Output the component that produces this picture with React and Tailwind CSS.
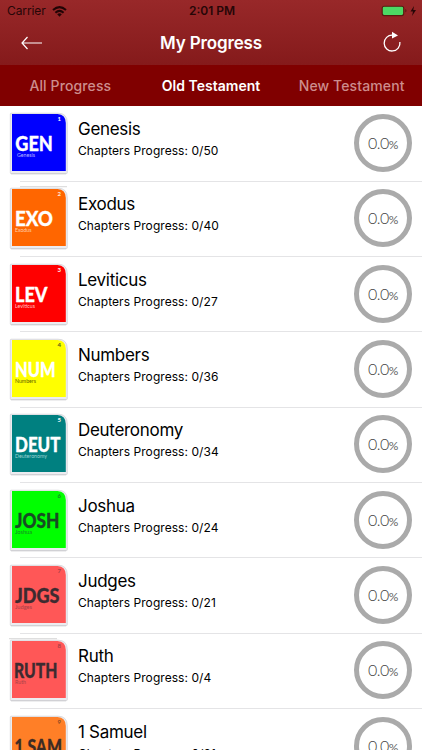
const books = [
  { name: "Genesis", code: "GEN", n: "1", total: 50, bg: "#0000ff", fg: "#ffffff", sub: "#b9b9ff", num: "#ffffff", x: 15.3, w: 37.5, sx: 17, sw: 18 },
  { name: "Exodus", code: "EXO", n: "2", total: 40, bg: "#ff6600", fg: "#ffffff", sub: "#ffd0ac", num: "#ffe8d8", x: 15, w: 38, sx: 15, sw: 16.5, edge: 20 },
  { name: "Leviticus", code: "LEV", n: "3", total: 27, bg: "#ff0000", fg: "#ffffff", sub: "#ffc5c5", num: "#ffffff", x: 15, w: 32.5, sx: 15, sw: 20 },
  { name: "Numbers", code: "NUM", n: "4", total: 36, bg: "#ffff00", fg: "#ffffff", sub: "#606000", num: "#55551c", x: 15, w: 40.5, sx: 15, sw: 21 },
  { name: "Deuteronomy", code: "DEUT", n: "5", total: 34, bg: "#008080", fg: "#ffffff", sub: "#9bd2d2", num: "#ffffff", x: 15, w: 45.5, sx: 15, sw: 32 },
  { name: "Joshua", code: "JOSH", n: "6", total: 24, bg: "#00ff00", fg: "#184c24", sub: "#148b25", num: "#148b25", x: 15, w: 44.5, sx: 15, sw: 17 },
  { name: "Judges", code: "JDGS", n: "7", total: 21, bg: "#ff5757", fg: "#3d2b30", sub: "#a84248", num: "#a84248", x: 15, w: 44.5, sx: 15, sw: 17 },
  { name: "Ruth", code: "RUTH", n: "8", total: 4, bg: "#ff5757", fg: "#3d2b30", sub: "#a84248", num: "#a84248", x: 14, w: 43.5, sx: 15, sw: 11, edge: 9 },
  { name: "1 Samuel", code: "1 SAM", n: "9", total: 31, bg: "#ff7f27", fg: "#3d2b24", sub: "#a85a28", num: "#8a4a24", x: 14.5, w: 47.5, sx: 15, sw: 22 },
];

function Cover({ b }) {
  return (
    <svg width="70" height="75" viewBox="0 0 70 75" className="block shrink-0 font-['Lato',sans-serif]">
      {b.edge && <path d={`M${b.edge} 5.7H${b.edge === 9 ? 57 : 67}`} stroke="#dedede" strokeWidth="1.2" />}
      <path d="M11 7.2H58Q67.3 7.2 67.3 16.8V66.7Q67.3 67.6 66.3 67.6H11Q10.3 67.6 10.3 66.7V8Q10.3 7.2 11 7.2Z" fill="#ececf0" stroke="#d0d0d4" strokeWidth="0.7" />
      <path d="M11 67.8H66" stroke="#c6c6ca" strokeWidth="0.8" />
      <path d="M12 8H57.5Q65.8 8.5 65.8 17V65H12Z" fill={b.bg} />
      <text x="57.6" y="15.2" fontSize="6" fontWeight="700" fill={b.num}>{b.n}</text>
      <text x={b.x} y="44.5" fontSize="20.3" fontWeight="900" textLength={b.w} lengthAdjust="spacingAndGlyphs" fill={b.fg} stroke={b.fg} strokeWidth="0.3" strokeLinejoin="round">{b.code}</text>
      <text x={b.sx} y="51" fontSize="5.5" textLength={b.sw} lengthAdjust="spacingAndGlyphs" fill={b.sub}>{b.name}</text>
    </svg>
  );
}

function Ring() {
  return (
    <div className="mt-2 mr-[10px] flex size-[58px] shrink-0 items-center justify-center rounded-full border-[5px] border-[#aaaaaa] font-['Lato',sans-serif] font-light text-[#444]">
      <span className="pt-[2px] text-[16px] leading-5 tracking-[-0.5px] whitespace-nowrap">
        0.0<span className="text-[12px] font-normal text-[#666]">%</span>
      </span>
    </div>
  );
}

function Row({ b }) {
  return (
    <div className="relative flex h-[75.33px] shrink-0 items-start">
      <Cover b={b} />
      <div className="flex-1 pt-[12px] pl-2 text-black">
        <div className="text-[17px] leading-[22px] tracking-[-0.3px]">{b.name}</div>
        <div className="mt-[3px] text-[12px] leading-4 tracking-[0.06px]">Chapters Progress: 0/{b.total}</div>
      </div>
      <Ring />
      <div className="absolute right-0 -bottom-[0.4px] left-5 h-px bg-[#e4e4e6]" />
    </div>
  );
}

export default function App() {
  return (
    <div className="flex h-[750px] w-[422px] flex-col overflow-hidden bg-white font-['Inter',sans-serif]">
      <header className="h-[65px] shrink-0 bg-linear-to-b from-[#982829] to-[#851a1b]">
        <div className="grid h-[22px] grid-cols-3 items-center px-[7px] text-[12px] text-[#260607]">
          <div className="flex items-center gap-[6px]">
            <span className="tracking-[-0.1px]">Carrier</span>
            <svg width="15" height="11" viewBox="0 0 15 11">
              <g fill="none" stroke="#210405" strokeWidth="2">
                <path d="M1 4.1Q7.5 -1.8 14 4.1" />
                <path d="M3.4 6.7Q7.5 3 11.6 6.7" />
              </g>
              <path d="M5.2 8.3Q7.5 6.4 9.8 8.3L7.5 10.7Z" fill="#210405" />
            </svg>
          </div>
          <div className="pl-[2px] text-center font-semibold">2:01 PM</div>
          <div className="flex justify-end">
            <svg width="37" height="12" viewBox="0 0 37 12" className="-mr-[3px]">
              <rect x="1.2" y="1.2" width="21.5" height="9.4" rx="2" fill="#4cd964" stroke="#551c10" strokeWidth="1.1" />
              <path d="M24.3 4v3.6Q25.5 7 25.5 5.8T24.3 4Z" fill="#551c10" />
              <path d="M33 1L29.5 6.4H32L31 11L35 5H32.3Z" fill="#260607" />
            </svg>
          </div>
        </div>
        <div className="flex h-[43px] items-center justify-between px-[21px] text-white">
          <svg width="22" height="14" viewBox="0 0 22 14" fill="none" stroke="white" strokeWidth="1.2" className="-mt-[2px]">
            <path d="M21 7H1M6.5 1L1 7L6.5 13" />
          </svg>
          <h1 className="-mt-px mr-[3px] text-[17px] leading-5 font-semibold tracking-[-0.15px]">My Progress</h1>
          <svg width="20" height="22" viewBox="0 0 20 22" fill="none" className="-mt-[3px] -mr-px">
            <path d="M10.5 4.2A7.9 7.9 0 1 0 17.9 11" stroke="white" strokeWidth="1.3" />
            <path d="M10 0.8L16 4.4L10 7.4Z" fill="white" />
          </svg>
        </div>
      </header>
      <nav className="grid h-[41px] shrink-0 grid-cols-3 bg-[#800000] text-center text-[14px] leading-[42px] font-medium tracking-[0.12px] text-[#cd8d8d]">
        <div>All Progress</div>
        <div className="border-b-[1.5px] border-white font-semibold tracking-[0.02px] text-white">Old Testament</div>
        <div>New Testament</div>
      </nav>
      <main className="flex min-h-0 flex-1 flex-col overflow-hidden">
        {books.map((b) => <Row key={b.name} b={b} />)}
      </main>
    </div>
  );
}
